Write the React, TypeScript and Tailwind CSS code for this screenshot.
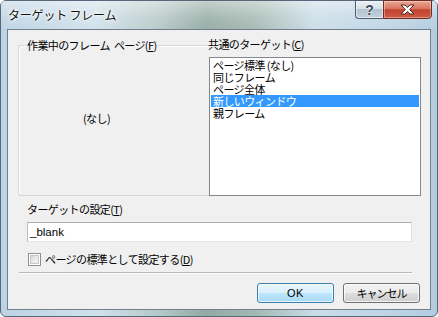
import React from "react";

const jp = "font-['Noto_Sans_CJK_JP','Noto_Sans',sans-serif]";

function U({ children }: { children: React.ReactNode }) {
  return <span className="underline underline-offset-[1px] decoration-[1px]">{children}</span>;
}

export default function App() {
  const items = ["ページ標準 (なし)", "同じフレーム", "ページ全体", "新しいウィンドウ", "親フレーム"];
  return (
    <div className="w-[438px] h-[317px] overflow-hidden">
      <div
        className={`w-[438px] h-[317px] flex flex-col rounded-[6px] border border-[#56687a] bg-[linear-gradient(90deg,#bcd3e3_0%,#d0e1eb_22%,#b6c9c8_36%,#93aaa2_47%,#a3b8b0_58%,#cadde8_72%,#bfd5e5_88%,#b2cce0_100%)] ${jp}`}
      >
        {/* title bar */}
        <div className="h-[28px] flex flex-row items-start bg-[linear-gradient(180deg,rgba(255,255,255,0.45)_0%,rgba(255,255,255,0.15)_60%,rgba(255,255,255,0.05)_100%)]">
          <div className="mt-[6px] ml-[7px] text-[12px] leading-[16px] tracking-[-0.2px] text-[#111] [text-shadow:0_0_6px_#fff,0_0_3px_#fff,0_0_2px_#fff]">
            ターゲット フレーム
          </div>
          <div className="flex-1" />
          <div className="flex flex-row mr-[5px] -mt-[1px]">
            <div className="w-[28px] h-[19px] rounded-bl-[4px] border border-[#4c5c6c] border-r-0 bg-[linear-gradient(180deg,#e9f0f5_0%,#d6e1e9_45%,#b3c4d1_50%,#c3d2dd_100%)] flex items-center justify-center shadow-[inset_0_0_0_1px_rgba(255,255,255,0.5)]">
              <span className="font-['Liberation_Sans',sans-serif] font-bold text-[14px] leading-[14px] text-[#3a4a58] [text-shadow:0_0_1px_#fff,0_0_2px_#fff]">?</span>
            </div>
            <div className="w-[49px] h-[19px] rounded-br-[4px] border border-[#6b2b22] bg-[linear-gradient(180deg,#eaa795_0%,#d97560_45%,#c2412f_52%,#d05c45_100%)] flex items-center justify-center shadow-[inset_0_0_0_1px_rgba(255,255,255,0.35)]">
              <svg width="17" height="11" viewBox="0 0 17 11">
                <path d="M2 1 H6 L8.5 3.6 L11 1 H15 L10.6 5.5 L15 10 H11 L8.5 7.4 L6 10 H2 L6.4 5.5 Z" fill="#fff" stroke="#4a2a25" strokeWidth="1" strokeLinejoin="round" />
              </svg>
            </div>
          </div>
        </div>

        {/* client area */}
        <div className="ml-[6px] w-[424px] h-[281px] border border-[#6f7f8e] bg-[#f0f0f0] flex flex-col text-[11px] text-black tracking-[-0.6px]">
          <div className="flex flex-row items-start">
            {/* group box */}
            <div className="ml-[10px] mt-[15px] w-[191px] h-[151px] rounded-l-[3px] border border-r-0 border-[#d0d9df] shadow-[inset_1px_1px_0_#fff] flex flex-col items-start">
              <div className="-mt-[7px] ml-[7px] bg-[#f0f0f0] px-[1px] leading-[13px]">
                作業中のフレーム<span className="ml-[4px]">ページ</span>(<U>F</U>)
              </div>
              <div className="mt-[60px] ml-[64px] leading-[13px]">(なし)</div>
            </div>
            {/* right column */}
            <div className="-ml-[1px] flex flex-col items-start">
              <div className="mt-[8px] bg-[#f0f0f0] leading-[13px] pr-[2px] h-[13px]">
                共通のターゲット(<U>C</U>)
              </div>
              <div className="mt-[6px] ml-[1px] w-[212px] h-[139px] border border-[#828790] bg-white pt-[1px] px-[1px]">
                {items.map((t, i) => (
                  <div
                    key={t}
                    className={`h-[12px] leading-[12px] pl-[2px] whitespace-nowrap ${i === 3 ? "bg-[#3399ff] text-white" : ""}`}
                  >
                    {t}
                  </div>
                ))}
              </div>
            </div>
          </div>

          <div className="mt-[7px] ml-[19px] leading-[13px]">
            ターゲットの設定(<U>T</U>)
          </div>
          <div className="mt-[6px] ml-[19px] w-[385px] h-[20px] bg-white border border-t-[#abadb3] border-l-[#b9bdc6] border-r-[#dbdfe6] border-b-[#e3e9ef] flex items-center pl-[2px]">
            <span className="font-['Liberation_Sans',sans-serif] text-[11.5px] tracking-[0px] leading-[14px]">_blank</span>
          </div>
          <div className="mt-[11px] ml-[20px] flex flex-row items-center h-[13px]">
            <div className="w-[13px] h-[13px] border border-[#8f8f8f] bg-white p-[1px]">
              <div className="w-full h-full border border-[#c6c6c6] bg-[linear-gradient(135deg,#d6d6d6_0%,#ececec_60%,#f7f7f7_100%)]" />
            </div>
            <div className="ml-[4px] leading-[13px]">
              ページの標準として設定する(<U>D</U>)
            </div>
          </div>
          <div className="mt-[6px] ml-[11px] w-[393px] h-[2px] border-t border-[#b8b8b8] border-b border-b-white" />
          <div className="mt-[9px] flex flex-row">
            <div className="ml-[249px] w-[77px] h-[20px] rounded-[3px] border border-[#3c7fb1] bg-[linear-gradient(180deg,#eaf6fd_0%,#d9f0fc_48%,#bee6fd_52%,#a7d9f5_100%)] shadow-[inset_0_0_0_1px_rgba(255,255,255,0.7)] flex items-center justify-center">
              <span className="font-['Liberation_Sans',sans-serif] text-[11px] tracking-[0.5px] leading-[14px]">OK</span>
            </div>
            <div className="ml-[9px] w-[77px] h-[20px] rounded-[3px] border border-[#707070] bg-[linear-gradient(180deg,#f2f2f2_0%,#ebebeb_48%,#dddddd_52%,#cfcfcf_100%)] shadow-[inset_0_0_0_1px_rgba(255,255,255,0.75)] flex items-center justify-center">
              <span className="leading-[13px] tracking-[-1px]">キャンセル</span>
            </div>
          </div>
        </div>
      </div>
    </div>
  );
}
